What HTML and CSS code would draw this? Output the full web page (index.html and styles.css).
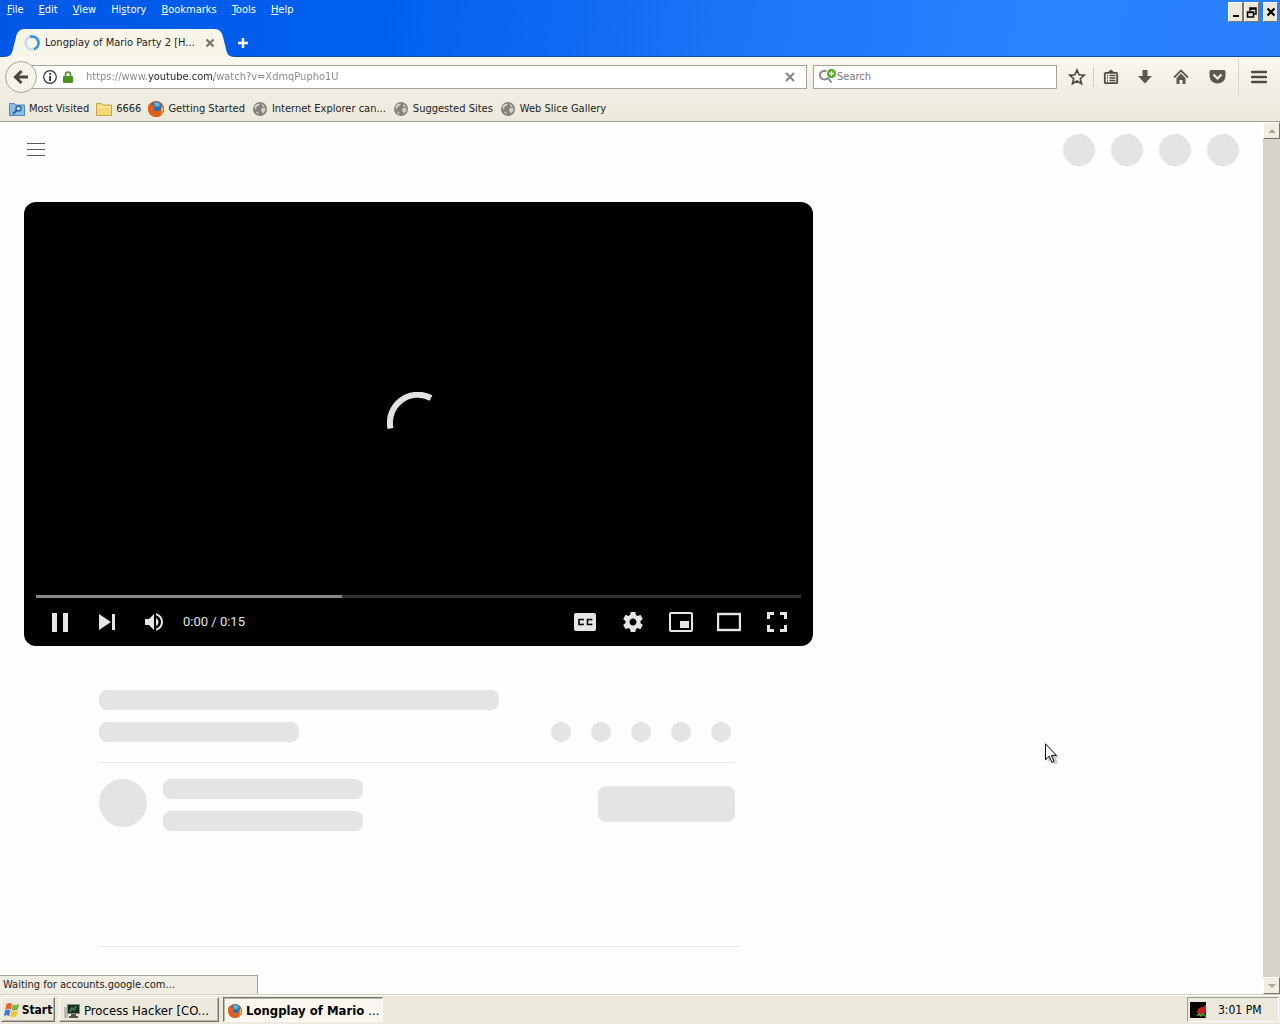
FILE: index.html
```html
<!DOCTYPE html>
<html lang="en">
<head>
<meta charset="utf-8">
<title>Longplay of Mario Party 2</title>
<link rel="stylesheet" href="styles.css">
</head>
<body>
<svg class="defs" aria-hidden="true">
  <symbol id="globe" viewBox="0 0 16 16"><circle cx="8" cy="8" r="7" fill="#85827c"/><path d="M2.500 5l2-2 3.500-.5-1 2-2.500 1.500-.5 2-1 .5zM9 8l2-1.500 2.500 1v2L11 12.500 9.500 10.500zM4 10.500l2 .5.5 2-1 .5z" fill="#cfcdc6"/><path d="M10 3l3 2-1 1-2-1z" fill="#cfcdc6"/></symbol>
  <symbol id="firefox" viewBox="0 0 16 16"><circle cx="8" cy="8" r="8" fill="#dd5219"/><circle cx="8.500" cy="6" r="5.500" fill="#2a6fb8"/><path d="M6 2c3-2 6 0 6 2l-2 2-3-1z" fill="#5fb4e6"/><path d="M0 7c0-2 1-4 2-5l1 2c2 0 3 0 4 1L5.500 7c0 3 3 4 6 2.500C14 8 14 5 12.500 3 15 4 16 7 16 8.500 15.500 13 12 16 8 16S0 12 0 7z" fill="#e0601d"/><path d="M14 5c2 3 1 7-2 9 2-3 2-5 1-6z" fill="#fbc23a"/></symbol>
</svg>

<header class="titlebar">
  <div class="menurow">
    <nav class="menus" aria-label="Menu bar">
      <button><u>F</u>ile</button><button><u>E</u>dit</button><button><u>V</u>iew</button><button>Hi<u>s</u>tory</button><button><u>B</u>ookmarks</button><button><u>T</u>ools</button><button><u>H</u>elp</button>
    </nav>
    <div class="winbtns">
      <button aria-label="Minimize"><svg width="12" height="14"><path d="M3 10h6v2H3z"/></svg></button>
      <button aria-label="Restore"><svg width="12" height="14"><path d="M4 6V3h6v6H8M4 4h6M1.500 7h6v5h-6zM1 7.500h7" fill="none" stroke="#000" stroke-width="1.500"/></svg></button>
      <button aria-label="Close" class="gap"><svg width="12" height="14"><path d="M2.500 3.500l7 7M9.500 3.500l-7 7" stroke="#000" stroke-width="2.200"/></svg></button>
    </div>
  </div>
  <div class="tabs">
    <svg width="20" height="28" viewBox="0 0 20 28"><path d="M0 28c6 0 8-3 9-8l3-12C13 3 16 0 20 0v28z" fill="#f8f5e9"/></svg>
    <div class="tab">
      <svg width="16" height="16" viewBox="0 0 16 16" fill="none" stroke-width="2.500"><circle cx="8" cy="8" r="6.500" stroke="#c8dcee"/><path d="M6 1.800a6.500 6.500 0 1 1 4 12.400" stroke="#3596e6"/></svg>
      <span class="tabtitle">Longplay of Mario Party 2 [H...</span>
      <button aria-label="Close tab"><svg width="10" height="10"><path d="M1.500 1.500l7 7M8.500 1.500l-7 7" stroke="#77756d" stroke-width="2.200"/></svg></button>
    </div>
    <svg width="20" height="28" viewBox="0 0 20 28"><path d="M20 28c-6 0-8-3-9-8L8 8C7 3 4 0 0 0v28z" fill="#f8f5e9"/></svg>
    <button class="newtab" aria-label="New tab"><svg width="12" height="12"><path d="M6 1v10M1 6h10" stroke="#fff" stroke-width="2.400"/></svg></button>
  </div>
</header>

<div class="chrome">
  <div class="toolbar">
    <button class="back" aria-label="Back"><svg width="16" height="16" viewBox="0 0 16 16"><path d="M15 8H3M8.500 2L2.500 8l6 6" fill="none" stroke="#4a4842" stroke-width="3"/></svg></button>
    <div class="urlbar">
      <svg width="14" height="14" viewBox="0 0 14 14"><circle cx="7" cy="7" r="6.300" fill="none" stroke="#333" stroke-width="1.200"/><path d="M6.200 6h1.800v5H6.200zM6.200 3h1.800v1.800H6.200z" fill="#333"/></svg>
      <svg class="lock" width="10" height="12" viewBox="0 0 10 12"><path d="M2.500 6V3.500a2.500 2.500 0 0 1 5 0V6" fill="none" stroke="#4a9420" stroke-width="1.600"/><rect y="5" width="10" height="7" rx="1" fill="#4a9420"/></svg>
      <input class="url" aria-label="Address" value="https://www.youtube.com/watch?v=XdmqPupho1U">
      <button class="stop" aria-label="Stop"><svg width="10" height="10"><path d="M1 1l8 8M9 1L1 9" stroke="#85868a" stroke-width="2"/></svg></button>
    </div>
    <div class="searchbar">
      <svg width="18" height="16" viewBox="0 0 18 16"><path d="M7.500 2.500a4.300 4.300 0 1 0 1 6.500M8.500 8.500l4 5" fill="none" stroke="#85888c" stroke-width="2"/><circle cx="12.500" cy="4.500" r="4.500" fill="#58a820"/><path d="M12.500 2v5M10 4.500h5" stroke="#fff" stroke-width="1.300"/></svg>
      <input aria-label="Search" placeholder="Search">
    </div>
    <div class="tools">
      <button class="star" aria-label="Bookmark"><svg width="18" height="18" viewBox="0 0 18 18"><path d="M9 2l2.100 4.800 5.100.500-3.900 3.400 1.200 5.100L9 13.100l-4.500 2.700 1.200-5.100L1.800 7.300l5.100-.500z" fill="none" stroke="#4f4c45" stroke-width="1.700"/></svg></button>
      <button class="library" aria-label="Library"><svg width="16" height="16" viewBox="0 0 16 16" fill="none" stroke="#4f4c45"><rect x="1.800" y="3.800" width="12.400" height="10.400" rx="1" stroke-width="1.800"/><path d="M4 6.500h1M6.500 6.500h6M4 9h1M6.500 9h6M4 11.500h1M6.500 11.500h6" stroke-width="1.400"/><path d="M4.500 3.500L8 .5l3.500 3z" fill="#4f4c45" stroke="none"/></svg></button>
      <button aria-label="Downloads"><svg width="16" height="16" viewBox="0 0 16 16"><path d="M5.500 1h5v6H15l-7 7.500L1 7h4.500z" fill="#5b5850"/></svg></button>
      <button aria-label="Home"><svg width="16" height="16" viewBox="0 0 16 16"><path d="M1 8.500l7-7 7 7" fill="none" stroke="#5b5850" stroke-width="1.800"/><path d="M3.500 9L8 4.500 12.500 9v6H9.500v-4h-3v4h-3z" fill="#5b5850"/></svg></button>
      <button aria-label="Pocket"><svg width="17" height="16" viewBox="0 0 17 16"><path d="M2 1h13q1.500 0 1.500 1.500V7a8 7.500 0 0 1-16 0V2.500Q.500 1 2 1z" fill="#5b5850"/><path d="M4.500 5.500l4 4 4-4" fill="none" stroke="#f4f1e6" stroke-width="2.200"/></svg></button>
      <button class="burger" aria-label="Open menu"><svg width="16" height="14"><path d="M1 2h14M1 7h14M1 12h14" stroke="#4f4c45" stroke-width="2.500" stroke-linecap="round"/></svg></button>
    </div>
  </div>
  <nav class="bookmarks" aria-label="Bookmarks">
    <a href="#"><svg width="16" height="16" viewBox="0 0 16 16"><path d="M.5 2.500h5l1 1.500h9v10.500H.5z" fill="#8dbbe6" stroke="#5586b8"/><circle cx="9.500" cy="7.500" r="2.500" fill="#d9ecfb" stroke="#285f9e" stroke-width="1.400"/><path d="M7.500 9.500L4 13" stroke="#285f9e" stroke-width="1.800"/></svg>Most Visited</a>
    <a href="#"><svg width="16" height="16" viewBox="0 0 16 16"><path d="M.5 2.500h5l1 1.500h9v10.500H.5z" fill="#f5d774" stroke="#c9a445"/><path d="M1 6h14" stroke="#fdf0b8"/></svg>6666</a>
    <a href="#"><svg width="16" height="16"><use href="#firefox"/></svg>Getting Started</a>
    <a href="#"><svg width="16" height="16"><use href="#globe"/></svg>Internet Explorer can...</a>
    <a href="#"><svg width="16" height="16"><use href="#globe"/></svg>Suggested Sites</a>
    <a href="#"><svg width="16" height="16"><use href="#globe"/></svg>Web Slice Gallery</a>
  </nav>
</div>

<div class="viewport">
  <main class="page">
    <div class="masthead">
      <button aria-label="Guide"><svg width="18" height="14"><path d="M0 .5h18M0 6.500h18M0 12.500h18" stroke="#5c5c5c"/></svg></button>
      <div class="dots"><i></i><i></i><i></i><i></i></div>
    </div>
    <div class="watch">
      <div class="primary">
        <section class="player" aria-label="Video player">
          <div class="stage"><svg width="64" height="64" viewBox="0 0 64 64"><path d="M3.500 36.500A28 28 0 0 1 44 6" fill="none" stroke="#e2e2e2" stroke-width="6"/></svg></div>
          <div class="progress"><span style="width:40%"></span></div>
          <div class="controls">
            <button aria-label="Pause"><svg width="24" height="24"><path d="M4 3h5v19H4zM15 3h5v19h-5z"/></svg></button>
            <button aria-label="Next"><svg width="24" height="24"><path d="M4 4l12 8-12 8zM17 4h3v16h-3z"/></svg></button>
            <button aria-label="Mute"><svg width="24" height="24"><path d="M3 9v6h4l5 5V4L7 9H3zm13.500 3c0-1.770-1.020-3.290-2.500-4.030v8.050c1.480-.730 2.500-2.250 2.500-4.020zM14 3.230v2.060c2.890.860 5 3.540 5 6.710s-2.110 5.850-5 6.710v2.060c4.010-.910 7-4.490 7-8.770s-2.990-7.860-7-8.770z"/></svg></button>
            <span class="time">0:00 / 0:15</span>
            <div class="right">
              <button aria-label="Subtitles"><svg width="24" height="24"><rect x="1" y="3" width="22" height="18" rx="2"/><path d="M10 10.500V9.500H6v5h4v-1M18.500 10.500V9.500h-4v5h4v-1" fill="none" stroke="#000" stroke-width="1.600"/></svg></button>
              <button aria-label="Settings"><svg width="24" height="24"><path d="M19.430 12.980c.04-.32.07-.64.07-.98s-.03-.66-.07-.98l2.110-1.650c.19-.15.24-.42.12-.64l-2-3.460c-.12-.22-.39-.3-.61-.22l-2.490 1c-.52-.4-1.080-.73-1.690-.98l-.38-2.650C14.460 2.180 14.250 2 14 2h-4c-.25 0-.46.18-.49.42l-.38 2.650c-.61.25-1.170.59-1.690.98l-2.490-1c-.23-.09-.49 0-.61.22l-2 3.460c-.13.22-.07.49.12.64l2.110 1.650c-.04.32-.07.65-.07.98s.03.66.07.98l-2.110 1.650c-.19.15-.24.42-.12.64l2 3.460c.12.22.39.3.61.22l2.490-1c.52.4 1.080.73 1.690.98l.38 2.650c.03.24.24.42.49.42h4c.25 0 .46-.18.49-.42l.38-2.650c.61-.25 1.170-.59 1.690-.98l2.490 1c.23.09.49 0 .61-.22l2-3.460c.12-.22.07-.49-.12-.64l-2.110-1.650zM12 15.500c-1.930 0-3.500-1.570-3.500-3.500s1.570-3.500 3.500-3.500 3.500 1.570 3.500 3.500-1.570 3.500-3.500 3.500z"/></svg></button>
              <button aria-label="Miniplayer"><svg width="24" height="24"><rect x="1" y="3" width="22" height="18" rx="1" fill="none" stroke="#e6e6e6" stroke-width="2"/><path d="M11 11h9v7h-9z"/></svg></button>
              <button aria-label="Theater mode"><svg width="24" height="24"><rect x="1" y="4" width="22" height="16" fill="none" stroke="#e6e6e6" stroke-width="2.400"/></svg></button>
              <button aria-label="Full screen"><svg width="24" height="24"><path d="M2 2h7v3H5v4H2zM15 2h7v7h-3V5h-4zM2 15h3v4h4v3H2zM19 15h3v7h-7v-3h4z"/></svg></button>
            </div>
          </div>
        </section>
        <section class="skeleton" aria-label="Loading">
          <div class="bar title"></div>
          <div class="row"><div class="bar"></div><div class="small"><i></i><i></i><i></i><i></i><i></i></div></div>
          <div class="owner">
            <div class="avatar"></div>
            <div class="lines"><div class="bar"></div><div class="bar"></div></div>
            <div class="pill"></div>
          </div>
        </section>
      </div>
    </div>
  </main>
  <div class="scroll">
    <button aria-label="Scroll up"><svg width="8" height="4"><path d="M4 0l4 4H0z" fill="#aaa79b"/></svg></button>
    <button aria-label="Scroll down"><svg width="8" height="4"><path d="M4 4l4-4H0z" fill="#aaa79b"/></svg></button>
  </div>
  <div class="status">Waiting for accounts.google.com...</div>
  <svg class="cursor" width="14" height="22" viewBox="0 0 14 22"><path d="M3 3v16l4-3 3 5 3-1-2-5h3z" fill="#000" opacity=".2"/><path d="M.5 .8v16l3.700-3.600 2.700 6.300 2.200-1-2.700-6.100h5.100z" fill="#fff" stroke="#000"/></svg>
</div>

<footer class="taskbar">
  <button class="start"><svg width="16" height="16" viewBox="0 0 16 16"><path d="M2.500 2q3-2 5.500 0L6.800 7.500Q4 6 1.200 7.500z" fill="#e8622c"/><path d="M8.800 2.500q3 1.500 6.500-.5l-1.500 5.700q-3 1.500-6 0z" fill="#78b83c"/><path d="M1 8.300q3-1.500 5.500 0L5.200 14q-2.500-1.500-5.200 0z" fill="#3e7fd8"/><path d="M7.500 8.800q3 1.500 6 0L12.200 14.500q-3 1.500-6 0z" fill="#f2c230"/></svg>Start</button>
  <button class="task"><svg width="16" height="16" viewBox="0 0 16 16"><path d="M0 4h4v11H0z" fill="#b9b9ae"/><rect x="3.500" y="1.500" width="12" height="9" fill="#16301f" stroke="#8b8b84"/><path d="M5 8h2V5h2v2h2V4h2" fill="none" stroke="#4c9a5d"/><path d="M7 11h5v2h2v2H5v-2h2z" fill="#55554e"/></svg><span>Process Hacker [CO...</span></button>
  <button class="task active"><svg width="14" height="14"><use href="#firefox"/></svg><span>Longplay of Mario <small>...</small></span></button>
  <div class="tray"><svg width="16" height="16"><path d="M0 0h16v16H0z"/><path d="M8 7l3-2h2l3-3v8l-3 3H9L7 10z" fill="#c81e1e"/><path d="M7 14l2-2 2 2 2-2 3 3" fill="none" stroke="#35b02c" stroke-width="1.500"/></svg><time>3:01 PM</time></div>
</footer>
</body>
</html>
```
FILE: styles.css
```css
* { box-sizing: border-box; }
body {
  margin: 0;
  min-height: 100vh;
  display: flex;
  flex-direction: column;
  font: 11px/18px "DejaVu Sans Condensed", "Noto Sans", sans-serif;
  color: #222;
  background: #ece9dc;
}
button {
  padding: 0;
  border: 0;
  background: none;
  font: inherit;
  color: inherit;
  display: flex;
  align-items: center;
  justify-content: center;
}
input {
  border: 0;
  padding: 0;
  outline: 0;
  min-width: 0;
  font: inherit;
  background: none;
}
svg { flex: none; display: block; }
.defs { position: absolute; width: 0; height: 0; }

/* title bar */
.titlebar {
  height: 57px;
  display: flex;
  flex-direction: column;
  justify-content: space-between;
  background: linear-gradient(100deg, #0057e5 0%, #0060ee 30%, #1a72f6 55%, #2a82ff 80%, #2a80fb 100%);
  box-shadow: inset 0 -1px #1b4a9e;
}
.menurow { display: flex; justify-content: space-between; }
.menus { display: flex; gap: 15px; padding: 1px 7px; color: #fff; height: 20px; }
.menus button { display: block; }
.winbtns { display: flex; padding: 2px 2px 0 0; gap: 1px; }
.winbtns button {
  width: 15px;
  height: 20px;
  background: #ece9dc;
  border: 1px solid;
  border-color: #fff #77746a #77746a #fff;
}
.winbtns .gap { margin-left: 3px; }
.tabs { display: flex; height: 28px; padding-left: 4px; }
.tab {
  flex: 0 1 191px;
  display: flex;
  align-items: center;
  gap: 5px;
  background: #f8f5e9;
}
.tabtitle { flex: 1; white-space: nowrap; }
.tab button { width: 10px; }
.newtab { width: 16px; }

/* navigation and bookmarks */
.chrome {
  background: linear-gradient(#fbf9ee, #efece1 60%, #ece9dc);
  border-bottom: 1px solid #9f9d94;
}
.toolbar { display: flex; align-items: center; height: 40px; padding: 0 1px 0 5px; }
.back {
  width: 32px;
  height: 32px;
  flex: none;
  border-radius: 50%;
  border: 1px solid #aaa79c;
  background: #f6f3e8;
  z-index: 1;
}
.urlbar, .searchbar {
  display: flex;
  align-items: center;
  height: 24px;
  background: #fff;
  border: 1px solid #a5a398;
}
.urlbar { flex: 1; margin: 0 6px 0 -8px; padding: 0 10px 0 13px; }
.lock { margin: 0 13px 0 6px; }
.url {
  flex: 1;
  color: transparent;
  background: linear-gradient(90deg, #85857f 62px, #222 62px 128px, #85857f 128px);
  -webkit-background-clip: text;
  background-clip: text;
}
.stop { width: 12px; }
.searchbar { width: 244px; padding: 0 5px; }
.searchbar input { flex: 1; }
.searchbar input::placeholder { color: #77777a; opacity: 1; }
.tools { display: flex; align-items: center; padding-left: 4px; }
.tools button { width: 36px; height: 36px; }
.tools .star { width: 33px; height: 20px; border-right: 1px solid #cfccc0; }
.tools .library { width: 33px; }
.tools .burger { margin-left: 3px; width: 41px; border-left: 1px solid #d8d5c9; }
.bookmarks { display: flex; gap: 7px; height: 24px; padding: 0 9px; align-items: center; }
.bookmarks a { display: flex; gap: 4px; align-items: center; color: #222; text-decoration: none; white-space: nowrap; }

/* page */
.viewport { flex: 1; display: flex; position: relative; background: #fefefe; }
.page { flex: 1; min-width: 0; }
.masthead { display: flex; align-items: center; justify-content: space-between; height: 56px; padding: 0 24px 0 27px; }
.dots, .small { display: flex; gap: 16px; }
.dots i, .small i { width: 32px; height: 32px; border-radius: 50%; background: #e6e3e6; }
.watch { display: grid; grid-template-columns: 1fr 402px; gap: 24px; padding: 24px; }
.player {
  display: flex;
  flex-direction: column;
  aspect-ratio: 16 / 9;
  border-radius: 12px;
  padding: 0 12px;
  background: #000;
  color: #e6e6e6;
}
.stage { flex: 1; display: flex; align-items: center; justify-content: center; padding-top: 51px; }
.progress { height: 3px; background: #333; }
.progress span { display: block; height: 100%; background: #8c8889; }
.controls { display: flex; align-items: center; height: 48px; }
.controls svg { fill: #e6e6e6; }
.controls button { width: 47px; height: 48px; }
.time { padding-left: 6px; font: 13px/16px Roboto, sans-serif; }
.controls .right { display: flex; margin-left: auto; }
.controls .right button { width: 48px; }
.skeleton {
  max-width: 640px;
  height: 257px;
  margin: 44px auto 0;
  border-bottom: 1px solid #e8e8e8;
}
.bar { width: 200px; height: 20px; border-radius: 8px; background: #e6e3e6; }
.title { width: 400px; }
.row { display: flex; justify-content: space-between; margin: 12px 4px 0 0; padding: 0 4px 20px 0; border-bottom: 1px solid #e8e8e8; }
.small { gap: 20px; }
.small i { width: 20px; height: 20px; }
.owner { display: flex; gap: 16px; margin: 16px 4px 0 0; }
.avatar { width: 48px; height: 48px; border-radius: 50%; background: #e6e3e6; }
.lines { display: grid; gap: 12px; }
.pill { width: 137px; height: 36px; margin: 7px 0 0 auto; border-radius: 8px; background: #e6e3e6; }

.scroll { width: 17px; display: flex; flex-direction: column; justify-content: space-between; background: #d6d2cc; }
.scroll button {
  height: 17px;
  background: #f0ede1;
  border: 1px solid;
  border-color: #fff #77746a #77746a #fff;
}
.status {
  position: absolute;
  left: 0;
  bottom: 0;
  width: 258px;
  padding: 0 3px;
  background: #efece1;
  border: 1px solid #a5a398;
  border-width: 1px 1px 0 0;
}
.cursor { position: absolute; left: 1045px; top: 621px; }

/* taskbar */
.taskbar {
  display: flex;
  align-items: center;
  gap: 4px;
  height: 30px;
  padding: 2px 1px;
  border-top: 1px solid #d2cfc3;
  box-shadow: inset 0 1px #fff;
  font: 12px/16px "DejaVu Sans Condensed", sans-serif;
  color: #000;
}
.taskbar button {
  height: 25px;
  border: 1px solid;
  border-color: #fff #77746a #77746a #fff;
  box-shadow: inset -1px -1px #b9b6aa;
  white-space: nowrap;
}
.taskbar .start { width: 54px; gap: 2px; font-weight: bold; }
.taskbar .task { width: 160px; justify-content: flex-start; padding: 2px 0 0 4px; gap: 4px; font-size: 13px; }
.taskbar .active {
  background: #f8f6ef;
  font-weight: bold;
  border-color: #77746a #fff #fff #77746a;
  box-shadow: inset 1px 1px #b9b6aa;
}
.active small { font: inherit; font-weight: normal; }
.tray {
  display: flex;
  align-items: center;
  gap: 12px;
  width: 92px;
  height: 25px;
  margin-left: auto;
  padding-left: 2px;
  border: 1px solid;
  border-color: #9f9d94 #fff #fff #9f9d94;
}
```
